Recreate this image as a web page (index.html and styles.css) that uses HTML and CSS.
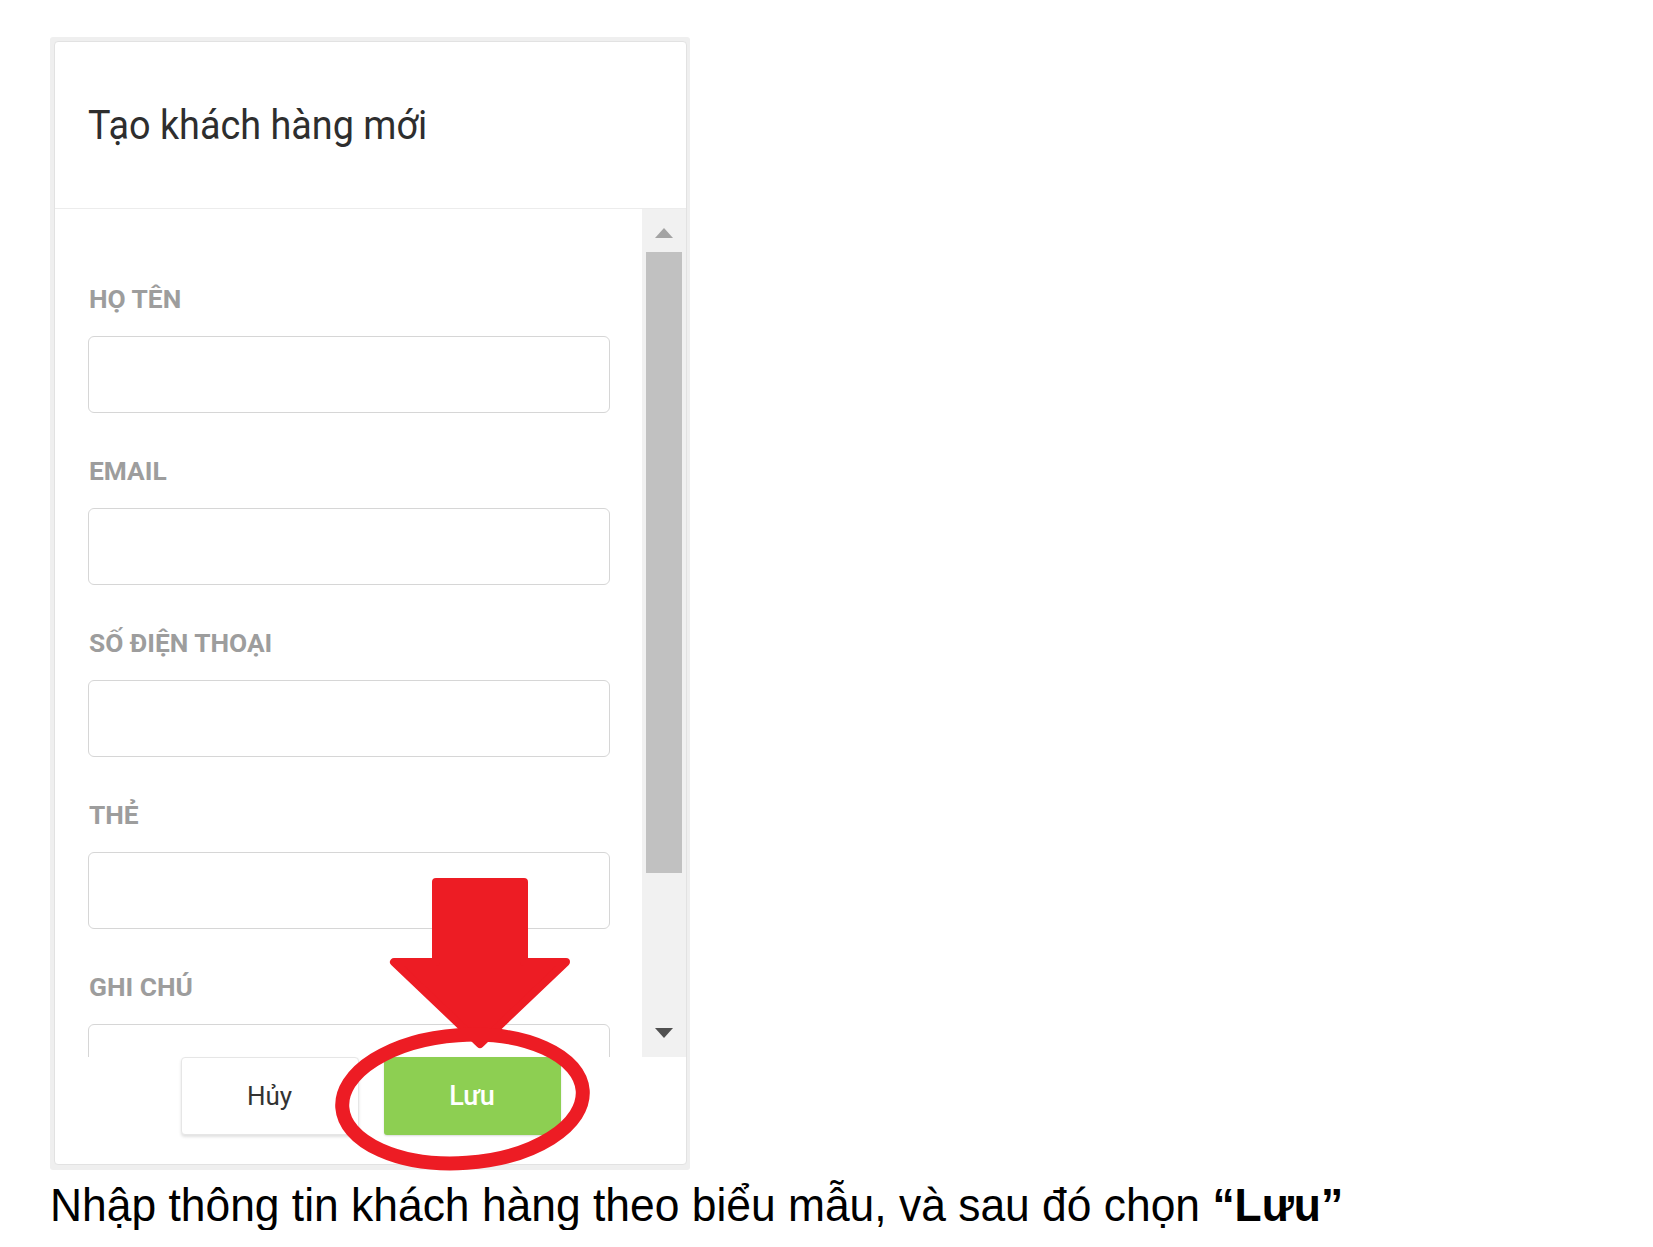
FILE: index.html
```html
<!DOCTYPE html>
<html lang="vi">
<head>
<meta charset="utf-8">
<title>Tạo khách hàng mới</title>
<link rel="stylesheet" href="styles.css">
</head>
<body>
<div class="page">
  <div class="shot">
    <div class="frame">
      <div class="card">
        <div class="header"><h1 class="title">Tạo khách hàng mới</h1></div>
        <div class="body">
          <div class="form">
            <div class="field"><div class="label">HỌ TÊN</div><div class="input"></div></div>
            <div class="field"><div class="label">EMAIL</div><div class="input"></div></div>
            <div class="field"><div class="label">SỐ ĐIỆN THOẠI</div><div class="input"></div></div>
            <div class="field"><div class="label">THẺ</div><div class="input"></div></div>
            <div class="field"><div class="label">GHI CHÚ</div><div class="input"></div></div>
          </div>
          <div class="scrollbar">
            <div class="sb-up"><span class="tri-up"></span></div>
            <div class="sb-track"><div class="sb-thumb"></div></div>
            <div class="sb-down"><span class="tri-down"></span></div>
          </div>
        </div>
        <div class="footer">
          <div class="btn btn-cancel">Hủy</div>
          <div class="btn btn-save">Lưu</div>
        </div>
      </div>
    </div>
    <svg class="annot" width="300" height="320" viewBox="0 0 300 320">
      <polygon points="106,15 194,15 194,95 236,95 150,177 64,95 106,95" fill="#ed1c24" stroke="#ed1c24" stroke-width="8" stroke-linejoin="round"/>
      <ellipse cx="132.5" cy="232" rx="120.5" ry="64" fill="none" stroke="#ed1c24" stroke-width="14" transform="rotate(-4 132.5 232)"/>
    </svg>
  </div>
  <p class="caption">Nhập thông tin khách hàng theo biểu mẫu, và sau đó chọn <b>“Lưu”</b></p>
</div>
</body>
</html>
```

FILE: styles.css
```css
* { box-sizing: border-box; }
html, body { margin: 0; padding: 0; background: #fff; }
.page { padding: 37px 0 0 50px; }
.shot { position: relative; width: 640px; }
.frame {
  background: #efefef;
  padding: 4px 3px 5px 4px;
  border-radius: 3px;
}
.card {
  background: #fff;
  border: 1px solid #e2e2e2;
  border-radius: 4px;
  overflow: hidden;
  font-family: Roboto, "Noto Sans", sans-serif;
}
.header {
  height: 167px;
  border-bottom: 1px solid #ececec;
  display: flex;
  align-items: center;
  padding-left: 33px;
}
.title {
  margin: 0;
  font-size: 37.8px;
  font-weight: 400;
  color: #2e2e2e;
  transform: scaleY(1.08);
  transform-origin: left center;
}
.body {
  height: 848px;
  display: flex;
  overflow: hidden;
}
.form {
  flex: 1;
  padding: 75px 0 0 33px;
  overflow: hidden;
}
.field { margin-bottom: 43px; }
.label {
  font-size: 26.3px;
  line-height: 30px;
  font-weight: 700;
  color: #9d9d9d;
  padding-left: 1px;
  margin-bottom: 22px;
}
.input {
  width: 522px;
  height: 77px;
  border: 1px solid #d6d6d6;
  border-radius: 6px;
  background: #fff;
}
.scrollbar {
  width: 44px;
  background: #f1f1f1;
  display: flex;
  flex-direction: column;
}
.sb-up, .sb-down {
  display: flex;
  align-items: center;
  justify-content: center;
}
.sb-up { height: 43px; padding-top: 5px; }
.sb-down { height: 48px; }
.sb-track { flex: 1; padding: 0 4px; }
.sb-thumb { height: 621px; background: #c1c1c1; }
.tri-up, .tri-down {
  width: 0; height: 0;
  border-left: 9px solid transparent;
  border-right: 9px solid transparent;
}
.tri-up { border-bottom: 10px solid #a3a3a3; }
.tri-down { border-top: 10px solid #505050; }
.footer {
  height: 107px;
  display: flex;
  justify-content: center;
  align-items: flex-start;
  gap: 25px;
}
.btn {
  height: 78px;
  display: flex;
  align-items: center;
  justify-content: center;
  font-size: 26px;
}
.btn-cancel {
  width: 178px;
  background: #fff;
  color: #333;
  border: 1px solid #e6e6e6;
  border-radius: 4px;
  box-shadow: 0 2px 3px rgba(0,0,0,0.12);
}
.btn-save {
  width: 177px;
  background: #8dcf52;
  color: #fff;
  font-size: 27px;
  font-weight: 500;
  border-radius: 3px;
  box-shadow: 0 1px 2px rgba(0,0,0,0.15);
}
.annot {
  position: absolute;
  left: 280px;
  top: 830px;
  overflow: visible;
}
.caption {
  margin: 10px 0 0 0;
  font-family: "Liberation Sans", Arial, sans-serif;
  font-size: 44.4px;
  color: #000;
  white-space: nowrap;
  transform: scaleY(1.06);
  transform-origin: left center;
}
.caption b { font-weight: 700; }
```
